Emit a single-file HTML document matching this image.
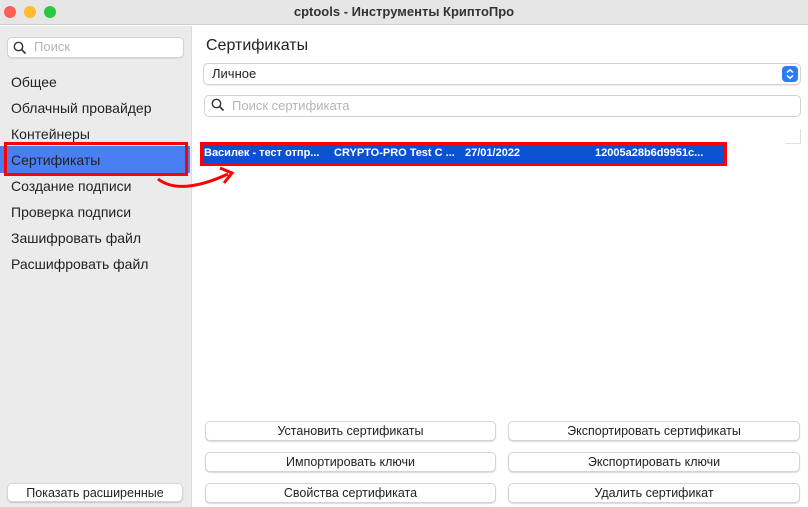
<!DOCTYPE html>
<html><head><meta charset="utf-8"><style>
*{box-sizing:border-box;margin:0;padding:0}
body{width:808px;height:507px;overflow:hidden;font-family:"Liberation Sans","Noto Sans CJK SC",sans-serif;background:#fff;position:relative;color:#222}
.abs{position:absolute}
.title{left:0;top:0;width:808px;height:25px;background:#e6e6e6;border-bottom:1px solid #d0d0d0;text-align:center;font-weight:bold;font-size:13px;line-height:24px;color:#333}
.dot{top:6px;width:12px;height:12px;border-radius:50%}
.side{left:0;top:26px;width:192px;height:481px;background:#ebebeb;border-right:1px solid #dcdcdc}
.item{left:11px;font-size:14px;color:#222}
.field{background:#fff;border:1px solid #d2d2d2;border-radius:5px;box-shadow:0 1px 1px rgba(0,0,0,.08)}
.btn{background:#fff;border:1px solid #d4d4d4;border-radius:5px;box-shadow:0 1px 1px rgba(0,0,0,.15);font-size:12.5px;text-align:center;line-height:19px;color:#222}
.ph{color:#b5b5b5;font-size:13px}
.r{top:147px;font-size:11px;color:#fff;font-weight:bold;white-space:pre}
</style></head><body>
<div class="abs title">cptools - Инструменты КриптоПро</div>
<div class="abs dot" style="left:4px;background:#fe5f57"></div>
<div class="abs dot" style="left:24px;background:#febc2e"></div>
<div class="abs dot" style="left:44px;background:#28c840"></div>
<div class="abs side"></div>
<div class="abs field" style="left:7px;top:37px;width:177px;height:21px"></div>
<svg class="abs" style="left:13px;top:41px" width="14" height="14" viewBox="0 0 14 14"><circle cx="5.5" cy="5.5" r="4.2" fill="none" stroke="#333" stroke-width="1.4"/><path d="M8.6 8.6L12.5 12.5" stroke="#333" stroke-width="1.6"/></svg>
<div class="abs ph" style="left:34px;top:39px">Поиск</div>
<div class="abs item" style="top:74px">Общее</div>
<div class="abs item" style="top:100px">Облачный провайдер</div>
<div class="abs item" style="top:126px">Контейнеры</div>
<div class="abs" style="left:0;top:146px;width:190px;height:27px;background:#4a7ff3"></div>
<div class="abs" style="left:4px;top:142px;width:184px;height:34px;border:3px solid #f00"></div>
<div class="abs item" style="top:152px">Сертификаты</div>
<div class="abs item" style="top:178px">Создание подписи</div>
<div class="abs item" style="top:204px">Проверка подписи</div>
<div class="abs item" style="top:230px">Зашифровать файл</div>
<div class="abs item" style="top:256px">Расшифровать файл</div>
<div class="abs btn" style="left:7px;top:483px;width:176px;height:19px">Показать расширенные</div>

<div class="abs" style="left:206px;top:37px;font-size:16px;color:#222">Сертификаты</div>
<div class="abs field" style="left:203px;top:63px;width:598px;height:22px"></div>
<div class="abs" style="left:212px;top:66px;font-size:13px">Личное</div>
<div class="abs" style="left:782px;top:66px;width:16px;height:16px;border-radius:4px;background:#2c7cf6"></div>
<svg class="abs" style="left:782px;top:66px" width="16" height="16" viewBox="0 0 16 16"><path d="M5 6.5L8 3.8L11 6.5M5 9.5L8 12.2L11 9.5" fill="none" stroke="#fff" stroke-width="1.5"/></svg>
<div class="abs field" style="left:204px;top:95px;width:597px;height:22px;box-shadow:none"></div>
<svg class="abs" style="left:211px;top:98px" width="14" height="14" viewBox="0 0 14 14"><circle cx="5.5" cy="5.5" r="4.2" fill="none" stroke="#333" stroke-width="1.4"/><path d="M8.6 8.6L12.5 12.5" stroke="#333" stroke-width="1.6"/></svg>
<div class="abs ph" style="left:232px;top:98px">Поиск сертификата</div>
<div class="abs" style="left:785px;top:143px;width:16px;height:1px;background:#e0e0e0"></div>
<div class="abs" style="left:800px;top:129px;width:1px;height:14px;background:#e0e0e0"></div>
<div class="abs" style="left:200px;top:142px;width:527px;height:24px;background:#0b52d3;border:3px solid #f00"></div>
<div class="abs r" style="left:204px">Василек - тест отпр...</div>
<div class="abs r" style="left:334px">CRYPTO-PRO Test C ...</div>
<div class="abs r" style="left:465px">27/01/2022</div>
<div class="abs r" style="left:595px">12005a28b6d9951c...</div>
<svg class="abs" style="left:150px;top:160px" width="90" height="35" viewBox="0 0 90 35"><path d="M8 19Q30 36 78 14" fill="none" stroke="#f00" stroke-width="3"/><path d="M70 8L82 13L74 23" fill="none" stroke="#f00" stroke-width="3"/></svg>

<div class="abs btn" style="left:205px;top:421px;width:291px;height:20px">Установить сертификаты</div>
<div class="abs btn" style="left:508px;top:421px;width:292px;height:20px">Экспортировать сертификаты</div>
<div class="abs btn" style="left:205px;top:452px;width:291px;height:20px">Импортировать ключи</div>
<div class="abs btn" style="left:508px;top:452px;width:292px;height:20px">Экспортировать ключи</div>
<div class="abs btn" style="left:205px;top:483px;width:291px;height:20px">Свойства сертификата</div>
<div class="abs btn" style="left:508px;top:483px;width:292px;height:20px">Удалить сертификат</div>
</body></html>
